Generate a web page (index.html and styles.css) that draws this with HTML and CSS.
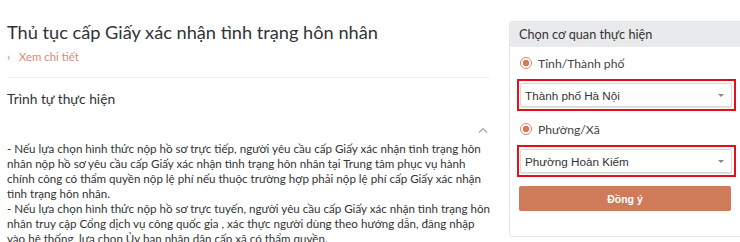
FILE: index.html
```html
<!DOCTYPE html>
<html lang="vi">
<head>
<meta charset="utf-8">
<title>Thủ tục cấp Giấy xác nhận tình trạng hôn nhân</title>
<link rel="stylesheet" href="styles.css">
</head>
<body>
<div class="page">
  <main class="main">
    <h1 class="title">Thủ tục cấp Giấy xác nhận tình trạng hôn nhân</h1>
    <a class="more" href="#"><span class="more-arrow">›</span>Xem chi tiết</a>
    <hr class="divider">
    <h2 class="section-title">Trình tự thực hiện</h2>
    <div class="toggle-row">
      <svg class="chevron" width="10" height="6" viewBox="0 0 10 6"><path d="M1 5.5 L5 1.5 L9 5.5" fill="none" stroke="#9aa3ad" stroke-width="1.2"/></svg>
    </div>
    <div class="content">
      <p>- Nếu lựa chọn hình thức nộp hồ sơ trực tiếp, người yêu cầu cấp Giấy xác nhận tình trạng hôn nhân nộp hồ sơ yêu cầu cấp Giấy xác nhận tình trạng hôn nhân tại Trung tâm phục vụ hành chính công có thẩm quyền nộp lệ phí nếu thuộc trường hợp phải nộp lệ phí cấp Giấy xác nhận tình trạng hôn nhân.</p>
      <p>- Nếu lựa chọn hình thức nộp hồ sơ trực tuyến, người yêu cầu cấp Giấy xác nhận tình trạng hôn nhân truy cập Cổng dịch vụ công quốc gia , xác thực người dùng theo hướng dẫn, đăng nhập vào hệ thống, lựa chọn Ủy ban nhân dân cấp xã có thẩm quyền.</p>
    </div>
  </main>
  <aside class="panel">
    <div class="panel-head">Chọn cơ quan thực hiện</div>
    <div class="panel-body">
      <label class="radio"><span class="radio-dot"></span>Tỉnh/Thành phố</label>
      <div class="highlight">
        <div class="select"><span>Thành phố Hà Nội</span><span class="caret"></span></div>
      </div>
      <label class="radio radio-2"><span class="radio-dot"></span>Phường/Xã</label>
      <div class="highlight">
        <div class="select"><span>Phường Hoàn Kiếm</span><span class="caret"></span></div>
      </div>
      <button class="btn" type="button">Đồng ý</button>
    </div>
  </aside>
</div>
</body>
</html>
```
FILE: styles.css
```css
html, body {
  margin: 0;
  padding: 0;
  background: #fff;
  overflow: hidden;
}
body {
  font-family: Lato, "Noto Sans", sans-serif;
  color: #333;
  width: 740px;
  height: 242px;
}
.page {
  display: flex;
  align-items: flex-start;
  padding-left: 7px;
}
.main {
  width: 483px;
  flex: none;
}
.title {
  margin: 20px 0 0;
  font-size: 18.2px;
  font-weight: 400;
  line-height: 24px;
  color: #2f3337;
}
.more {
  display: flex;
  align-items: center;
  margin-top: 5px;
  font-size: 11.4px;
  line-height: 16px;
  color: #d98a6e;
  text-decoration: none;
}
.more-arrow {
  width: 12px;
  font-size: 12px;
  color: #d98a6e;
}
.divider {
  margin: 12px 0 0;
  border: 0;
  border-top: 1px solid #eef1f5;
}
.section-title {
  margin: 11px 0 0;
  font-size: 13.8px;
  font-weight: 400;
  line-height: 20px;
  color: #2f3337;
}
.toggle-row {
  display: flex;
  justify-content: flex-end;
  padding-right: 2px;
  margin-top: 18px;
  height: 6px;
}
.chevron { display: block; }
.content {
  margin-top: 8px;
  font-size: 11.6px;
  line-height: 15px;
  color: #333;
}
.content p { margin: 0; }

.panel {
  margin-left: 19px;
  margin-top: 21px;
  width: 240px;
  flex: none;
  border: 1px solid #e6e6e6;
  border-radius: 3px;
  height: 216px;
  box-sizing: border-box;
}
.panel-head {
  background: #e9eaeb;
  height: 25px;
  line-height: 25px;
  padding-left: 9px;
  font-size: 12.7px;
  color: #333;
}
.panel-body {
  padding: 8px 0 0 7px;
}
.radio {
  display: flex;
  align-items: center;
  gap: 6px;
  padding-left: 3px;
  height: 16px;
  font-size: 12.2px;
  color: #444;
}
.radio-2 {
  margin-top: 10px;
}
.radio-dot {
  width: 12px;
  height: 12px;
  box-sizing: border-box;
  border: 1.5px solid #dc8a6c;
  border-radius: 50%;
  background: radial-gradient(circle, #d9795a 0 3px, #fff 3.5px);
}
.highlight {
  margin-top: 8px;
  width: 219px;
  height: 32px;
  box-sizing: border-box;
  border: 2px solid #e3101a;
  padding: 2px 2px 2px 1px;
}
.select {
  height: 100%;
  box-sizing: border-box;
  border: 1px solid #d8d8d8;
  border-radius: 2px;
  box-shadow: 0 1px 1px rgba(0,0,0,0.12);
  display: flex;
  align-items: center;
  justify-content: space-between;
  padding: 0 7px 0 4px;
  font-family: "Liberation Sans", Arial, sans-serif;
  font-size: 11.7px;
  color: #333;
  background: #fff;
}
.caret {
  width: 0;
  height: 0;
  border-left: 3px solid transparent;
  border-right: 3px solid transparent;
  border-top: 3px solid #888;
}
.btn {
  display: block;
  margin-top: 9px;
  margin-left: 2px;
  width: 212px;
  height: 25px;
  border: 0;
  border-radius: 2px;
  background: #cf7a58;
  color: #fff;
  font-family: "Liberation Sans", Arial, sans-serif;
  font-weight: 700;
  font-size: 10.5px;
}
```
